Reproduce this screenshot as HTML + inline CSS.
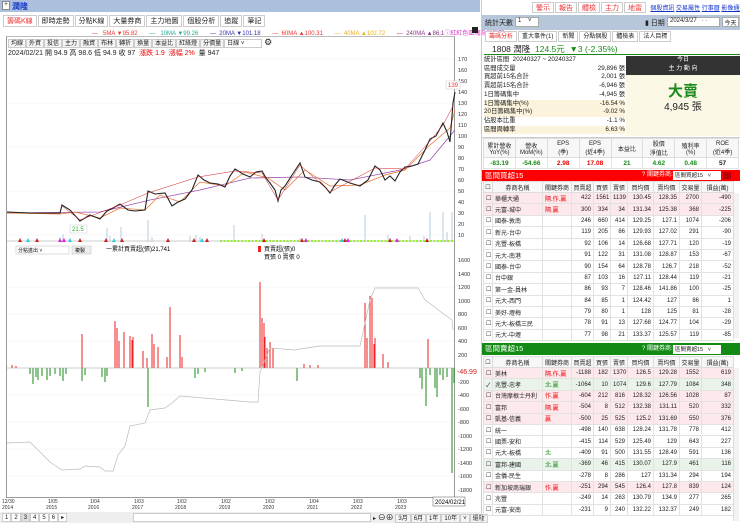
<!DOCTYPE html>
<html><head><meta charset="utf-8">
<style>
*{box-sizing:border-box;margin:0;padding:0}
body{width:740px;height:523px;overflow:hidden;background:#fff;font-family:"Liberation Sans","Noto Sans CJK TC",sans-serif;font-size:7px;color:#222;position:relative}
.a{position:absolute}
.tab{display:inline-block;border:1px solid #ccc;background:#fff;padding:1px 3px;margin-right:1px;font-size:7px;height:12px;line-height:9px}
.tb{display:inline-block;border:1px solid #ccc;background:#f4f4f4;padding:0 2px;font-size:6px;height:9px;line-height:8px}
table{border-collapse:collapse;table-layout:fixed;font-size:6px}
td{border:1px solid #e2e2e2;height:11.4px;padding:0 2px;text-align:right;white-space:nowrap;overflow:hidden}
td.l{text-align:left}
th{border:1px solid #ddd;height:11px;font-weight:normal;font-size:6px;background:#f7f7f7}
.pk td{background:#fde8ec}
.gk td{background:#eaf3ea}
.r{color:#e00}.g{color:#1a8a1a}
</style></head><body>
<!-- left title bar -->
<div class="a" style="left:0;top:0;width:480px;height:12px;background:#aac0dc"></div>
<div class="a" style="left:2px;top:1px;width:8px;height:9px;background:#fff;border:1px solid #888;font-size:6px;line-height:7px;text-align:center">+</div>
<div class="a" style="left:12px;top:1px;color:#1535c8;font-size:8px;font-weight:bold">潤隆</div>
<!-- tabs -->
<div class="a" style="left:3px;top:15px;white-space:nowrap"><span class="tab" style="color:#e33">籌碼K線</span><span class="tab">即時走勢</span><span class="tab">分點K線</span><span class="tab">大量券商</span><span class="tab">主力地圖</span><span class="tab">個股分析</span><span class="tab">追蹤</span><span class="tab">筆記</span></div>
<div class="a" style="left:92px;top:28px;font-size:6px;white-space:nowrap"><span style="color:#e33">— &nbsp; 5MA ▼95.82</span> &nbsp; &nbsp; &nbsp; <span style="color:#2a9">— &nbsp; 10MA ▼99.26</span> &nbsp; &nbsp; &nbsp; <span style="color:#33a">— &nbsp;20MA ▼101.18</span> &nbsp; &nbsp; &nbsp; <span style="color:#e33">— &nbsp;60MA ▲100.31</span> &nbsp; &nbsp; &nbsp; <span style="color:#e9b020">— &nbsp;40MA ▲102.72</span> &nbsp; &nbsp; &nbsp; <span style="color:#838">— &nbsp;240MA ▲86.1</span><span style="color:#d3c">ⓘ紅紅色區塊為停權期</span></div>
<div class="a" style="left:472px;top:27px;width:6px;height:6px;background:#222"></div>
<!-- chart frame -->
<div class="a" style="left:6px;top:36px;width:449px;height:462px;border:1px solid #999;border-top:1px solid #bbb"></div>
<div class="a" style="left:8px;top:37px;white-space:nowrap"><span class="tb">均線</span><span class="tb">外資</span><span class="tb">投信</span><span class="tb">主力</span><span class="tb">融資</span><span class="tb">布林</span><span class="tb">轉折</span><span class="tb">換量</span><span class="tb">本益比</span><span class="tb">紅綠燈</span><span class="tb">分價量</span><span class="tb" style="width:38px;background:#fff">日線 ˅</span> <span style="font-size:9px">⚙</span></div>
<div class="a" style="left:8px;top:48px;font-size:7px;white-space:nowrap">2024/02/21 開 94.9 高 98.6 低 94.9 收 97 &nbsp;<span class="r">漲跌 1.9 &nbsp;漲幅 2%</span> &nbsp;量 947</div>
<svg class="a" style="left:0;top:0" width="480" height="523">
<g stroke="#eee" stroke-width="0.5">
<line x1="7" y1="59" x2="454" y2="59"/><line x1="7" y1="103" x2="454" y2="103"/><line x1="7" y1="147" x2="454" y2="147"/><line x1="7" y1="191" x2="454" y2="191"/><line x1="7" y1="235" x2="454" y2="235"/>
<line x1="7" y1="287" x2="454" y2="287"/><line x1="7" y1="314" x2="454" y2="314"/><line x1="7" y1="341" x2="454" y2="341"/><line x1="7" y1="395" x2="454" y2="395"/><line x1="7" y1="422" x2="454" y2="422"/><line x1="7" y1="449" x2="454" y2="449"/><line x1="7" y1="476" x2="454" y2="476"/>
</g>
<g font-size="5.5" fill="#333">
<text x="458" y="61">170</text><text x="458" y="72">160</text><text x="458" y="83">150</text><text x="458" y="94">140</text><text x="458" y="105">130</text><text x="458" y="116">120</text><text x="458" y="127">110</text><text x="458" y="138">100</text><text x="458" y="149">90</text><text x="458" y="160">80</text><text x="458" y="171">70</text><text x="458" y="182">60</text><text x="458" y="193">50</text><text x="458" y="204">40</text><text x="458" y="215">30</text><text x="458" y="226">20</text><text x="458" y="237">10</text>
<text x="458" y="262">1600</text><text x="458" y="276">1400</text><text x="458" y="289">1200</text><text x="458" y="303">1000</text><text x="458" y="316">800</text><text x="458" y="330">600</text><text x="458" y="343">400</text><text x="458" y="357">200</text><text x="458" y="384">-200</text><text x="458" y="397">-400</text><text x="458" y="411">-600</text><text x="458" y="424">-800</text><text x="458" y="438">-1000</text><text x="458" y="451">-1200</text><text x="458" y="465">-1400</text><text x="458" y="478">-1600</text><text x="458" y="492">-1800</text>
</g>
<rect x="446" y="81" width="14" height="8" fill="#fff" stroke="#ccc" stroke-width="0.5"/><text x="448" y="87" font-size="6" fill="#e33">139</text>
<rect x="70" y="225" width="17" height="8" fill="#fff" stroke="#ccc" stroke-width="0.5"/><text x="72" y="231" font-size="6" fill="#3a3">21.5</text>
<!-- volume -->
<g stroke="#8aaed0" stroke-width="0.6">
<path d="M60 242v-5M63 242v-8M70 242v-4M107 242v-14M110 242v-6M121 242v-15M148 242v-22M152 242v-5M190 242v-6M196 242v-7M200 242v-5M234 242v-17M262 242v-8M300 242v-4M365 242v-27M388 242v-7M410 242v-6M430 242v-30M443 242v-30M452 242v-30M424 242v-6M447 242v-10"/>
</g>
<path d="M7 241H454" stroke="#ccc"/>
<path d="M220 241H454" stroke="#9e3" stroke-width="2" stroke-dasharray="2 1.5"/>
<g fill="#c22"><path d="M18 242l2-4 2 4zM35 242l2-4 2 4zM78 242l2-4 2 4zM104 242l2-4 2 4zM120 242l2-4 2 4zM166 242l2-4 2 4zM192 242l2-4 2 4zM205 242l2-4 2 4zM262 242l2-4 2 4zM300 242l2-4 2 4zM343 242l2-4 2 4zM388 242l2-4 2 4zM425 242l2-4 2 4z"/></g>
<g fill="#d2d"><path d="M58 242l2-4 2 4zM62 242l2-4 2 4zM304 242l2-4 2 4zM346 242l2-4 2 4zM395 242l2-4 2 4z"/></g>
<g fill="#3cd"><path d="M26 242l2-4 2 4zM68 242l2-4 2 4zM112 242l2-4 2 4zM200 242l2-4 2 4zM340 242l2-4 2 4z"/></g>
<!-- MAs and price -->
<polyline fill="none" stroke="#a050b0" stroke-width="0.8" points="7,213 100,212 150,200 200,190 250,178 300,177 350,180 400,170 430,160 455,130"/>
<polyline fill="none" stroke="#e8702a" stroke-width="0.7" points="7,213 60,214 75,212 100,218 120,208 145,210 160,195 180,202 200,182 225,186 245,172 268,178 285,190 305,170 330,186 360,185 385,175 405,170 430,145 450,128 455,110"/>
<polyline fill="none" stroke="#222" stroke-width="1.1" points="7,212 30,213 60,213 62,205 70,210 80,221 90,215 100,219 107,211 113,208 120,204 128,210 135,211 145,210 148,191 155,194 165,193 172,206 178,202 185,199 192,190 198,175 204,180 210,183 218,184 225,187 230,176 235,169 243,174 250,177 256,172 262,171 266,178 270,183 275,190 278,201 281,190 285,186 292,175 300,163 305,177 312,180 320,182 326,188 330,193 335,185 340,179 350,183 360,186 368,180 375,166 380,170 385,180 390,176 395,181 400,172 405,167 412,166 418,164 424,152 430,139 436,136 443,123 447,132 450,142 453,103 455,92"/>
<polyline fill="none" stroke="#c22" stroke-width="0.5" points="62,206 80,220 120,205 148,193 198,177 235,171 262,173 278,200 300,165 330,192 375,168 405,169 430,141 443,125 453,106"/>
<!-- lower: bars -->
<g stroke="#e22" stroke-width="1">
<path d="M12 368v-3M16 368v-2M82 368v-34M115 368v-47M117 368v-40M119 368v-27M124 368v-36M130 368v-32M132 368v-28M133 368v-31M143 368v-17M147 368v-10M152 368v-34M154 368v-24M158 368v-21M167 368v-11M170 368v-61M180 368v-33M182 368v-11M260 368v-86M262 368v-50M264 368v-45M265 368v-31M267 368v-20M270 368v-26M273 368v-20M304 368v-4M310 368v-3M318 368v-3M365 368v-65M367 368v-30M370 368v-72M372 368v-70M374 368v-24M375 368v-30M383 368v-14M388 368v-6M428 368v-29"/>
</g>
<g stroke="#1a8a1a" stroke-width="1">
<path d="M30 368v6M33 368v16M36 368v9M38 368v12M42 368v8M47 368v12M50 368v8M55 368v6M60 368v8M63 368v13M66 368v6M82 368v13M85 368v7M102 368v9M105 368v14M107 368v8M148 368v39M195 368v10M198 368v6M205 368v4M235 368v5M242 368v3M297 368v13M420 368v10M422 368v21M426 368v38M430 368v7M435 368v20M437 368v29M440 368v7M443 368v12M447 368v9M452 368v105M454 368v15"/>
</g>
<path d="M7 368H454" stroke="#999" stroke-width="0.5"/>
<polyline fill="none" stroke="#bbb" stroke-width="0.7" points="7,443 30,442 40,452 50,462 62,470 80,469 85,466 100,467 105,471 113,471 118,455 125,446 130,426 145,423 150,410 165,408 172,403 180,396 250,402 258,402 260,372 270,348 295,350 300,349 320,346 360,346 370,300 375,288 418,288 425,300 428,302 445,315 452,320 453,330"/>
<text x="457" y="374" font-size="7" fill="#c22">-46.99</text>
<!-- lower controls -->
<rect x="16" y="246" width="53" height="8" fill="#fff" stroke="#bbb" stroke-width="0.5"/><text x="18" y="252" font-size="5">分點進出 ˅</text>
<rect x="72" y="246" width="19" height="8" fill="#eee" stroke="#bbb" stroke-width="0.5"/><text x="75" y="252" font-size="5">複製</text>
<text x="106" y="251" font-size="6">一累計買賣超(張)21,741</text>
<rect x="258" y="246" width="3" height="6" fill="#e22"/><text x="264" y="251" font-size="6">買賣超(張)0</text>
<text x="264" y="259" font-size="6">買張 0 賣張 0</text>
<!-- date axis -->
<g font-size="5" fill="#333">
<text x="2" y="503">12/30</text><text x="2" y="509">2014</text>
<text x="48" y="503">1/05</text><text x="46" y="509">2015</text>
<text x="90" y="503">1/04</text><text x="88" y="509">2016</text>
<text x="134" y="503">1/03</text><text x="132" y="509">2017</text>
<text x="177" y="503">1/02</text><text x="175" y="509">2018</text>
<text x="221" y="503">1/02</text><text x="219" y="509">2019</text>
<text x="265" y="503">1/02</text><text x="263" y="509">2020</text>
<text x="309" y="503">1/04</text><text x="307" y="509">2021</text>
<text x="353" y="503">1/03</text><text x="351" y="509">2022</text>
<text x="397" y="503">1/03</text><text x="395" y="509">2023</text>
</g>
<rect x="433" y="497" width="32" height="9" fill="#fff" stroke="#555" stroke-width="0.5"/><text x="435" y="504" font-size="6">2024/02/21</text>
</svg>
<!-- bottom bar -->
<div class="a" style="left:0;top:512px;width:480px;height:11px;background:#eee"></div>
<div class="a" style="left:2px;top:513px;white-space:nowrap;font-size:6px"><span class="tb" style="background:#fff">1</span><span class="tb" style="background:#fff">2</span><span class="tb" style="background:#ddd">3</span><span class="tb" style="background:#fff">4</span><span class="tb" style="background:#fff">5</span><span class="tb" style="background:#fff">6</span><span class="tb" style="background:#fff">▸</span></div>
<div class="a" style="left:133px;top:513px;width:238px;height:9px;background:#fff;border:1px solid #ccc"></div>
<div class="a" style="left:373px;top:512px;white-space:nowrap;font-size:6px">▸ <span style="font-size:8px">⊖⊕</span> <span class="tb">3月</span><span class="tb">6月</span><span class="tb">1年</span><span class="tb">10年</span><span class="tb">˅</span><span class="tb">還權</span></div>

<!-- RIGHT PANEL -->
<div class="a" style="left:481px;top:0;width:259px;height:523px;border-left:1px solid #ccc"></div>
<div class="a" style="left:532px;top:2px;white-space:nowrap;font-size:6px"><span class="tab" style="color:#e33;height:11px">警示</span><span class="tab" style="color:#e33;height:11px">報告</span><span class="tab" style="color:#e33;height:11px">體檢</span><span class="tab" style="color:#e33;height:11px">主力</span><span class="tab" style="color:#e33;height:11px">地雷</span> &nbsp;<span style="color:#1535c8;text-decoration:underline">個股資訊</span> <span style="color:#1535c8;text-decoration:underline">交易屬性</span> <span style="color:#1535c8;text-decoration:underline">行事曆</span> <span style="color:#1535c8;text-decoration:underline">影像通知</span></div>
<div class="a" style="left:482px;top:15px;width:258px;height:15px;background:#b7c7db"></div>
<div class="a" style="left:485px;top:18px;font-size:7px">統計天數</div>
<div class="a" style="left:515px;top:17px;width:24px;height:10px;background:#fff;border:1px solid #aaa;font-size:6px;padding-left:2px">1 &nbsp; &nbsp;˅</div>
<div class="a" style="left:645px;top:18px;font-size:7px">▮ 日期</div>
<div class="a" style="left:667px;top:17px;width:53px;height:10px;background:#fff;border:1px solid #aaa;font-size:6px;padding-left:2px">2024/3/27 &nbsp; · ·</div>
<div class="a" style="left:722px;top:17px;width:17px;height:10px;background:#fff;border:1px solid #aaa;font-size:6px;text-align:center">今天</div>
<div class="a" style="left:485px;top:31px;white-space:nowrap"><span class="tab" style="color:#e33;height:11px;font-size:6px">籌碼分析</span><span class="tab" style="height:11px;font-size:6px">重大事件(1)</span><span class="tab" style="height:11px;font-size:6px">新聞</span><span class="tab" style="height:11px;font-size:6px">分點個股</span><span class="tab" style="height:11px;font-size:6px">體檢表</span><span class="tab" style="height:11px;font-size:6px">法人目標</span></div>
<div class="a" style="left:492px;top:43px;font-size:8.5px;white-space:nowrap">1808 潤隆 &nbsp;<span class="g">124.5元 &nbsp;▼3 (-2.35%)</span></div>
<div class="a" style="left:484px;top:54px;width:256px;height:1px;background:#1a8a1a"></div>
<div class="a" style="left:484px;top:56px;width:141px;font-size:6.3px;line-height:8.7px">
<div>統計區間 &nbsp;20240327 ~ 20240327</div>
<div>區間成交量<span style="float:right">29,896 張</span></div>
<div>買超前15名合計<span style="float:right">2,001 張</span></div>
<div>賣超前15名合計<span style="float:right">-6,946 張</span></div>
<div>1日籌碼集中<span style="float:right">-4,945 張</span></div>
<div style="background:#fbf3dc">1日籌碼集中(%)<span style="float:right">-16.54 %</span></div>
<div style="background:#fbf3dc">20日籌碼集中(%)<span style="float:right">-9.02 %</span></div>
<div>佔股本比重<span style="float:right">-1.1 %</span></div>
<div style="background:#fbf3dc">區間周轉率<span style="float:right">6.63 %</span></div>
</div>
<div class="a" style="left:626px;top:56px;width:114px;height:80px;background:#fbf8e6"></div>
<div class="a" style="left:626px;top:56px;width:114px;height:19px;background:#333;color:#fff;font-size:6px;text-align:center;line-height:9px">今日<br>主 力 動 向</div>
<div class="a" style="left:626px;top:80px;width:114px;text-align:center;color:#1a8a1a;font-size:15px;font-weight:bold">大賣</div>
<div class="a" style="left:626px;top:98px;width:114px;text-align:center;font-size:10px">4,945 張</div>
<div class="a" style="left:482px;top:137px;width:258px;height:1px;background:#ccc"></div>
<table class="a" style="left:483px;top:138px;width:256px;font-size:5.5px">
<tr style="height:18px"><th>累計營收<br>YoY(%)</th><th>營收<br>MoM(%)</th><th>EPS<br>(季)</th><th>EPS<br>(近4季)</th><th>本益比</th><th>股價<br>淨值比</th><th>殖利率<br>(%)</th><th>ROE<br>(近4季)</th></tr>
<tr style="font-weight:bold;font-size:6.5px;text-align:center"><td class="g" style="text-align:center">-83.19</td><td class="g" style="text-align:center">-54.66</td><td class="r" style="text-align:center">2.98</td><td class="r" style="text-align:center">17.08</td><td class="g" style="text-align:center">21</td><td class="g" style="text-align:center">4.62</td><td class="g" style="text-align:center">0.48</td><td style="text-align:center">57</td></tr>
</table>
<!-- buy table -->
<div class="a" style="left:482px;top:170px;width:258px;height:11px;background:#f00;color:#fff;font-size:7.5px;padding-left:3px;line-height:11px">區間買超15<span style="position:absolute;left:160px;font-size:6px">? 關鍵券商:</span></div>
<div class="a" style="left:673px;top:171px;width:48px;height:9px;background:#fff;font-size:5.5px;padding-left:2px">區間買超15 &nbsp; ˅</div>
<div class="a" style="left:723px;top:172px;width:8px;height:7px;background:#b00"></div>
<table class="a" style="left:483px;top:181px;width:250px">
<colgroup><col style="width:9px"><col style="width:50px"><col style="width:29px"><col style="width:22px"><col style="width:17px"><col style="width:17px"><col style="width:26px"><col style="width:26px"><col style="width:22px"><col style="width:32px"></colgroup>
<tr><th>☐</th><th>券商名稱</th><th>關鍵券商</th><th>買賣超</th><th>買張</th><th>賣張</th><th>買均價</th><th>賣均價</th><th>交易量</th><th>損益(萬)</th></tr>
<tr class="pk"><td class="l">☐</td><td class="l">華櫃大通</td><td class="l r">隔.作.贏</td><td>422</td><td>1561</td><td>1139</td><td>130.45</td><td>128.35</td><td>2700</td><td>-490</td></tr>
<tr class="pk"><td class="l">☐</td><td class="l">元富-城中</td><td class="l r">隔.贏</td><td>300</td><td>334</td><td>34</td><td>131.34</td><td>125.38</td><td>368</td><td>-225</td></tr>
<tr><td class="l">☐</td><td class="l">國泰-敦南</td><td></td><td>246</td><td>660</td><td>414</td><td>129.25</td><td>127.1</td><td>1074</td><td>-206</td></tr>
<tr><td class="l">☐</td><td class="l">新光-台中</td><td></td><td>119</td><td>205</td><td>86</td><td>129.93</td><td>127.02</td><td>291</td><td>-90</td></tr>
<tr><td class="l">☐</td><td class="l">兆豐-板橋</td><td></td><td>92</td><td>106</td><td>14</td><td>126.68</td><td>127.71</td><td>120</td><td>-19</td></tr>
<tr><td class="l">☐</td><td class="l">元大-南港</td><td></td><td>91</td><td>122</td><td>31</td><td>131.08</td><td>128.87</td><td>153</td><td>-67</td></tr>
<tr><td class="l">☐</td><td class="l">國泰-台中</td><td></td><td>90</td><td>154</td><td>64</td><td>128.78</td><td>126.7</td><td>218</td><td>-52</td></tr>
<tr><td class="l">☐</td><td class="l">台中銀</td><td></td><td>87</td><td>103</td><td>16</td><td>127.11</td><td>128.44</td><td>119</td><td>-21</td></tr>
<tr><td class="l">☐</td><td class="l">第一金-員林</td><td></td><td>86</td><td>93</td><td>7</td><td>128.46</td><td>141.86</td><td>100</td><td>-25</td></tr>
<tr><td class="l">☐</td><td class="l">元大-西門</td><td></td><td>84</td><td>85</td><td>1</td><td>124.42</td><td>127</td><td>86</td><td>1</td></tr>
<tr><td class="l">☐</td><td class="l">美好-壢梅</td><td></td><td>79</td><td>80</td><td>1</td><td>128</td><td>125</td><td>81</td><td>-28</td></tr>
<tr><td class="l">☐</td><td class="l">元大-板橋三民</td><td></td><td>78</td><td>91</td><td>13</td><td>127.68</td><td>124.77</td><td>104</td><td>-29</td></tr>
<tr><td class="l">☐</td><td class="l">元大-中壢</td><td></td><td>77</td><td>98</td><td>21</td><td>133.37</td><td>125.57</td><td>119</td><td>-85</td></tr>
</table>
<!-- sell table -->
<div class="a" style="left:482px;top:343px;width:258px;height:12px;background:#138a13;color:#fff;font-size:7.5px;padding-left:3px;line-height:12px">區間賣超15<span style="position:absolute;left:160px;font-size:6px">? 關鍵券商:</span></div>
<div class="a" style="left:673px;top:345px;width:48px;height:9px;background:#fff;font-size:5.5px;padding-left:2px">區間賣超15 &nbsp; ˅</div>
<table class="a" style="left:483px;top:356px;width:250px">
<colgroup><col style="width:9px"><col style="width:50px"><col style="width:29px"><col style="width:22px"><col style="width:17px"><col style="width:17px"><col style="width:26px"><col style="width:26px"><col style="width:22px"><col style="width:32px"></colgroup>
<tr><th>☐</th><th>券商名稱</th><th>關鍵券商</th><th>買賣超</th><th>買張</th><th>賣張</th><th>買均價</th><th>賣均價</th><th>交易量</th><th>損益(萬)</th></tr>
<tr class="pk"><td class="l">☐</td><td class="l">美林</td><td class="l r">隔.作.贏</td><td>-1188</td><td>182</td><td>1370</td><td>126.5</td><td>129.28</td><td>1552</td><td>619</td></tr>
<tr class="gk"><td class="l">✓</td><td class="l">兆豐-忠孝</td><td class="l g">北.贏</td><td>-1064</td><td>10</td><td>1074</td><td>129.6</td><td>127.79</td><td>1084</td><td>348</td></tr>
<tr class="pk"><td class="l">☐</td><td class="l">台灣摩根士丹利</td><td class="l r">作.贏</td><td>-604</td><td>212</td><td>816</td><td>128.32</td><td>126.56</td><td>1028</td><td>87</td></tr>
<tr class="pk"><td class="l">☐</td><td class="l">富邦</td><td class="l r">隔.贏</td><td>-504</td><td>8</td><td>512</td><td>132.38</td><td>131.11</td><td>520</td><td>332</td></tr>
<tr class="pk"><td class="l">☐</td><td class="l">凱基-信義</td><td class="l r">贏</td><td>-500</td><td>25</td><td>525</td><td>125.2</td><td>131.69</td><td>550</td><td>376</td></tr>
<tr><td class="l">☐</td><td class="l">統一</td><td></td><td>-498</td><td>140</td><td>638</td><td>128.24</td><td>131.78</td><td>778</td><td>412</td></tr>
<tr><td class="l">☐</td><td class="l">國票-安和</td><td></td><td>-415</td><td>114</td><td>529</td><td>125.49</td><td>129</td><td>643</td><td>227</td></tr>
<tr><td class="l">☐</td><td class="l">元大-板橋</td><td class="l g">北</td><td>-409</td><td>91</td><td>500</td><td>131.55</td><td>128.49</td><td>591</td><td>136</td></tr>
<tr class="gk"><td class="l">☐</td><td class="l">富邦-建國</td><td class="l g">北.贏</td><td>-369</td><td>46</td><td>415</td><td>130.07</td><td>127.9</td><td>461</td><td>116</td></tr>
<tr><td class="l">☐</td><td class="l">金儀-民生</td><td></td><td>-278</td><td>8</td><td>286</td><td>127</td><td>131.34</td><td>294</td><td>194</td></tr>
<tr class="pk"><td class="l">☐</td><td class="l">新加坡商瑞銀</td><td class="l r">作.贏</td><td>-251</td><td>294</td><td>545</td><td>126.4</td><td>127.8</td><td>839</td><td>124</td></tr>
<tr><td class="l">☐</td><td class="l">兆豐</td><td></td><td>-249</td><td>14</td><td>263</td><td>130.79</td><td>134.9</td><td>277</td><td>265</td></tr>
<tr><td class="l">☐</td><td class="l">元富-安南</td><td></td><td>-231</td><td>9</td><td>240</td><td>132.22</td><td>132.37</td><td>249</td><td>182</td></tr>
</table>
<div class="a" style="left:733px;top:368px;width:6px;height:153px;background:#f2f2f2;border-left:1px solid #ddd"></div>
<div class="a" style="left:733px;top:193px;width:6px;height:145px;background:#f2f2f2;border-left:1px solid #ddd"></div>
</body></html>
